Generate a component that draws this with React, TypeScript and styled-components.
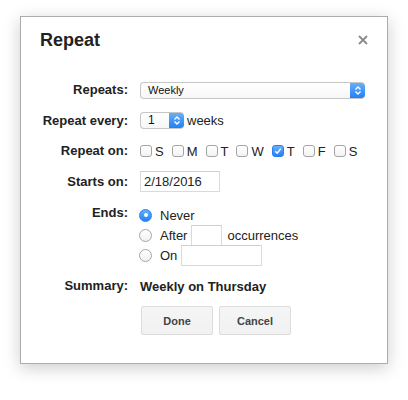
import React from 'react'
import styled, { createGlobalStyle } from 'styled-components'

const GlobalStyle = createGlobalStyle`
  html, body {
    margin: 0;
    padding: 0;
    background: #fff;
  }
  body {
    font-family: 'Liberation Sans', Arial, sans-serif;
    color: #222;
  }
`

const Page = styled.div`
  width: 408px;
  height: 400px;
  padding: 16px 20px 0 20px;
  box-sizing: border-box;
`

const Dialog = styled.div`
  width: 368px;
  box-sizing: border-box;
  border: 1px solid #acacac;
  background: #fff;
  box-shadow: 0 4px 16px rgba(0, 0, 0, 0.2);
  padding: 11px 19px 28px 19px;
`

const Header = styled.div`
  display: flex;
  justify-content: space-between;
  align-items: center;
  height: 24px;
`

const Title = styled.h1`
  margin: 0;
  font-size: 18px;
  line-height: 24px;
  font-weight: bold;
  color: #222;
`

const CloseButton = styled.button`
  border: 0;
  padding: 0;
  background: none;
  width: 10px;
  height: 10px;
  display: flex;
  margin-top: -1px;
  cursor: pointer;
`

const Form = styled.div`
  margin-top: 23px;
  display: flex;
  flex-direction: column;
`

const Row = styled.div<{ $h?: number; $top?: number; $align?: string }>`
  display: grid;
  grid-template-columns: 88px 1fr;
  column-gap: 12px;
  align-items: ${(p) => p.$align || 'center'};
  height: ${(p) => (p.$h ? `${p.$h}px` : 'auto')};
  margin-top: ${(p) => p.$top || 0}px;
`

const Label = styled.div`
  text-align: right;
  font-size: 13px;
  line-height: 16px;
  font-weight: bold;
  color: #222;
  white-space: nowrap;
`

const Field = styled.div`
  display: flex;
  align-items: center;
  font-size: 13px;
  color: #222;
`

const SelectBox = styled.div<{ $w: number }>`
  display: flex;
  align-items: stretch;
  width: ${(p) => p.$w}px;
  height: 17px;
  box-sizing: border-box;
  border: 1px solid #c6c6c6;
  border-right: 0;
  border-radius: 4px;
  background: linear-gradient(#fff, #f7f7f7);
  overflow: hidden;
`

const SelectValue = styled.div<{ $size: number; $pad: number }>`
  flex: 1;
  font-size: ${(p) => p.$size}px;
  line-height: 15px;
  padding-left: ${(p) => p.$pad}px;
  color: #111;
`

const StepperCap = styled.div`
  width: 15px;
  margin-top: -1px;
  margin-bottom: -1px;
  background: linear-gradient(#6ab3fb, #1e7cf3);
  display: flex;
  align-items: center;
  justify-content: center;
  border-radius: 0 4px 4px 0;
`

const Unit = styled.span`
  margin-left: 3px;
  font-size: 13px;
`

const Days = styled.div`
  display: flex;
  align-items: center;
  gap: 8px;
`

const Day = styled.label`
  display: flex;
  align-items: center;
  gap: 3px;
  font-size: 13px;
  color: #222;
`

const CheckBox = styled.span<{ $on?: boolean }>`
  width: 12px;
  height: 12px;
  box-sizing: border-box;
  border-radius: 3px;
  border: 1px solid ${(p) => (p.$on ? '#2a7ff0' : '#a4a4a4')};
  background: ${(p) => (p.$on ? 'linear-gradient(#68b0fa, #2281f4)' : 'linear-gradient(#fff, #f3f3f3)')};
  display: flex;
  align-items: center;
  justify-content: center;
`

const TextInput = styled.div<{ $w: number }>`
  width: ${(p) => p.$w}px;
  height: 21px;
  box-sizing: border-box;
  border: 1px solid #dadada;
  border-top-color: #cfcfcf;
  font-size: 13px;
  line-height: 19px;
  padding-left: 3px;
  color: #222;
  background: #fff;
`

const Options = styled.div`
  display: flex;
  flex-direction: column;
`

const Option = styled.div`
  display: flex;
  align-items: center;
  height: 20px;
  font-size: 13px;
  color: #222;
  margin-left: -1px;
`

const Radio = styled.span<{ $on?: boolean }>`
  width: 13px;
  height: 13px;
  box-sizing: border-box;
  border-radius: 50%;
  border: 1px solid ${(p) => (p.$on ? '#2a7ff0' : '#a6a6a6')};
  background: ${(p) => (p.$on ? 'linear-gradient(#68b0fa, #2281f4)' : 'linear-gradient(#fff, #f0f0f0)')};
  margin-right: 8px;
  display: flex;
  align-items: center;
  justify-content: center;
  &::after {
    content: '';
    display: ${(p) => (p.$on ? 'block' : 'none')};
    width: 4px;
    height: 4px;
    border-radius: 50%;
    background: #fff;
  }
`

const InlineInput = styled(TextInput)`
  margin: 0 5px 0 4px;
`

const Summary = styled.div`
  font-size: 13px;
  font-weight: bold;
  color: #222;
`

const Buttons = styled.div`
  display: flex;
  gap: 6px;
  margin: 5px 0 0 101px;
`

const Button = styled.button`
  width: 72px;
  height: 29px;
  box-sizing: border-box;
  border: 1px solid #dcdcdc;
  border-radius: 2px;
  background: linear-gradient(#f5f5f5, #f1f1f1);
  font-family: 'Liberation Sans', Arial, sans-serif;
  font-size: 11px;
  font-weight: bold;
  color: #444;
  padding: 0;
`

const Chevrons = () => (
  <svg width="8" height="11" viewBox="0 0 8 11">
    <path d="M1.5 4.5 L4 2 L6.5 4.5 M1.5 6.5 L4 9 L6.5 6.5" fill="none" stroke="#fff" strokeWidth="1.4" />
  </svg>
)

const days = [
  { d: 'S', on: false },
  { d: 'M', on: false },
  { d: 'T', on: false },
  { d: 'W', on: false },
  { d: 'T', on: true },
  { d: 'F', on: false },
  { d: 'S', on: false },
]

export default function App() {
  return (
    <>
      <GlobalStyle />
      <Page>
        <Dialog>
          <Header>
            <Title>Repeat</Title>
            <CloseButton aria-label="Close">
              <svg width="10" height="10" viewBox="0 0 10 10">
                <path d="M1 1 L9 9 M9 1 L1 9" stroke="#8a8a8a" strokeWidth="1.8" />
              </svg>
            </CloseButton>
          </Header>
          <Form>
            <Row $h={30}>
              <Label>Repeats:</Label>
              <Field>
                <SelectBox $w={225}>
                  <SelectValue $size={11} $pad={7}>Weekly</SelectValue>
                  <StepperCap>
                    <Chevrons />
                  </StepperCap>
                </SelectBox>
              </Field>
            </Row>
            <Row $h={31}>
              <Label>Repeat every:</Label>
              <Field>
                <SelectBox $w={44}>
                  <SelectValue $size={12} $pad={7}>1</SelectValue>
                  <StepperCap>
                    <Chevrons />
                  </StepperCap>
                </SelectBox>
                <Unit>weeks</Unit>
              </Field>
            </Row>
            <Row $h={30}>
              <Label>Repeat on:</Label>
              <Days>
                {days.map((x, i) => (
                  <Day key={i}>
                    <CheckBox $on={x.on}>
                      {x.on && (
                        <svg width="8" height="8" viewBox="0 0 8 8">
                          <path d="M1.2 4.2 L3.2 6.2 L6.8 1.6" fill="none" stroke="#fff" strokeWidth="1.5" />
                        </svg>
                      )}
                    </CheckBox>
                    {x.d}
                  </Day>
                ))}
              </Days>
            </Row>
            <Row $h={31}>
              <Label>Starts on:</Label>
              <Field>
                <TextInput $w={80}>2/18/2016</TextInput>
              </Field>
            </Row>
            <Row $top={8} $align="start">
              <Label>Ends:</Label>
              <Options>
                <Option>
                  <Radio $on />
                  Never
                </Option>
                <Option>
                  <Radio />
                  After
                  <InlineInput $w={31} />
                  occurrences
                </Option>
                <Option>
                  <Radio />
                  On
                  <InlineInput $w={81} />
                </Option>
              </Options>
            </Row>
            <Row $h={30} $top={6}>
              <Label>Summary:</Label>
              <Summary>Weekly on Thursday</Summary>
            </Row>
            <Buttons>
              <Button>Done</Button>
              <Button>Cancel</Button>
            </Buttons>
          </Form>
        </Dialog>
      </Page>
    </>
  )
}
